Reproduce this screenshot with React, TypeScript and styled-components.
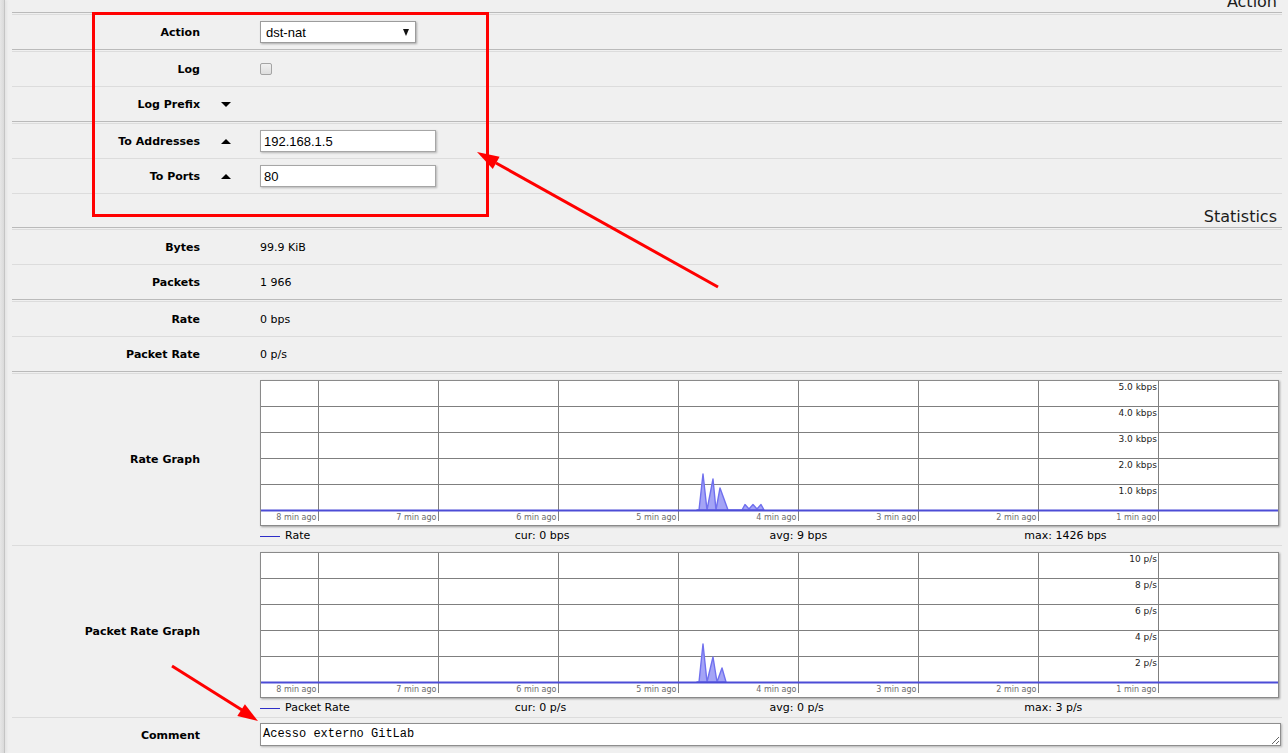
import React from "react";
import styled, { createGlobalStyle } from "styled-components";

const GlobalStyle = createGlobalStyle`
  * { box-sizing: border-box; }
  html, body {
    margin: 0;
    padding: 0;
    background: #f0f0f0;
    overflow: hidden;
  }
  body {
    font-family: "DejaVu Sans", Verdana, sans-serif;
    font-size: 11px;
    color: #000;
  }
`;

const Screen = styled.div`
  position: relative;
  width: 1288px;
  height: 753px;
  overflow: hidden;
  display: flex;
`;

const Sidebar = styled.div`
  width: 5px;
  flex-shrink: 0;
  background: linear-gradient(to right, #e6e6e6, #dadada);
  border-right: 1px solid #c4c4c4;
  box-shadow: 2px 0 3px #e4e4e4;
`;

const Content = styled.div`
  flex: 1;
  margin: -22px 6px 0 7px;
`;

const Heading = styled.div`
  height: 34px;
  border-top: 1px solid #dcdcdc;
  display: flex;
  align-items: flex-end;
  justify-content: flex-end;
  padding: 0 5px 1px 0;
  font-size: 16px;
  line-height: 18px;
  color: #1c1c1c;
`;

const Group = styled.div`
  border-top: 1px solid #bababa;
  padding-top: 1px;
`;

const Row = styled.div`
  display: grid;
  grid-template-columns: 188px 60px 1fr;
  align-items: center;
  min-height: 35px;
  border-top: 1px solid #dcdcdc;
`;

const Label = styled.div`
  text-align: right;
  font-weight: bold;
`;

const Toggle = styled.span<{ $up?: boolean }>`
  display: block;
  width: 0;
  height: 0;
  margin-left: 21px;
  border-left: 5px solid transparent;
  border-right: 5px solid transparent;
  ${(p) => (p.$up ? "border-bottom: 5px solid #000;" : "border-top: 5px solid #000;")}
`;

const Value = styled.div`
  display: flex;
  align-items: center;
`;

const SelectBox = styled.div`
  width: 156px;
  height: 22px;
  display: flex;
  align-items: center;
  justify-content: space-between;
  padding: 0 6px 0 5px;
  background: #fff;
  border: 1px solid #9c9c9c;
  box-shadow: 1px 1px 2px rgba(0, 0, 0, 0.3);
  font: 13px "Liberation Sans", Arial, sans-serif;
`;

const Caret = styled.span`
  width: 0;
  height: 0;
  border-left: 3.5px solid transparent;
  border-right: 3.5px solid transparent;
  border-top: 7px solid #111;
`;

const CheckBox = styled.span`
  display: block;
  width: 12px;
  height: 12px;
  border: 1px solid #a4a4a4;
  border-radius: 2px;
  background: linear-gradient(#f0f0f0, #dedede);
`;

const TextInput = styled.input`
  width: 176px;
  height: 22px;
  padding: 0 3px;
  border: 1px solid #a6a6a6;
  background: #fff;
  box-shadow: 1px 1px 2px rgba(0, 0, 0, 0.25);
  font: 13px "Liberation Sans", Arial, sans-serif;
  color: #000;
  outline: none;
`;

const GraphCell = styled.div`
  padding: 6px 0 1px;
`;

const Frame = styled.div`
  width: 1019px;
  height: 146px;
  border: 1px solid #8a8a8a;
  background: #fff;
  box-shadow: 1px 1px 2px rgba(0, 0, 0, 0.35);
  svg {
    display: block;
  }
`;

const Legend = styled.div`
  width: 1019px;
  height: 18px;
  padding-top: 2px;
  display: grid;
  grid-template-columns: repeat(4, 1fr);
  align-items: center;
  line-height: 16px;
`;

const LegendName = styled.div`
  display: flex;
  align-items: center;
  gap: 5px;
  &::before {
    content: "";
    width: 20px;
    height: 1px;
    background: #2e2ec8;
  }
`;

const CommentCell = styled.div`
  padding-top: 5px;
  align-self: start;
`;

const Comment = styled.textarea`
  display: block;
  width: 1021px;
  height: 23px;
  padding: 3px 2px;
  border: 1px solid #8e8e8e;
  background: #fff;
  box-shadow: 1px 1px 2px rgba(0, 0, 0, 0.25);
  font: 12px/15px "Liberation Mono", "DejaVu Sans Mono", monospace;
  color: #000;
  outline: none;
  resize: both;
  overflow: hidden;
`;

const Annotations = styled.svg`
  position: absolute;
  left: 0;
  top: 0;
  pointer-events: none;
`;

const GW = 1017;
const GH = 144;
const vLines = [57, 177, 297, 417, 537, 657, 777, 897];
const hLines = [25, 51, 77, 103];
const times = ["8 min ago", "7 min ago", "6 min ago", "5 min ago", "4 min ago", "3 min ago", "2 min ago", "1 min ago"];

type GraphProps = { yLabels: string[]; points: string; legend: string[] };

const Graph = ({ yLabels, points, legend }: GraphProps) => (
  <GraphCell>
    <Frame>
      <svg width={GW} height={GH}>
        {hLines.map((y) => (
          <line key={y} x1={0} x2={GW} y1={y + 0.5} y2={y + 0.5} stroke="#7f7f7f" />
        ))}
        {vLines.map((x) => (
          <line key={x} x1={x + 0.5} x2={x + 0.5} y1={0} y2={140} stroke="#7f7f7f" />
        ))}
        <polygon points={points} fill="#a4a4f6" stroke="#7070ee" strokeWidth={1.4} strokeLinejoin="round" />
        <line x1={0} x2={GW} y1={129.5} y2={129.5} stroke="#4c4cd6" strokeWidth={1.8} />
        {yLabels.map((t, i) => (
          <text key={t} x={896} y={i * 26 + 9} textAnchor="end" fontSize={9} fill="#222">
            {t}
          </text>
        ))}
        {times.map((t, i) => (
          <text key={t} x={vLines[i] - 1.5} y={139} textAnchor="end" fontSize={8} fill="#6a6a6a">
            {t}
          </text>
        ))}
      </svg>
    </Frame>
    <Legend>
      <LegendName>{legend[0]}</LegendName>
      <div>{legend[1]}</div>
      <div>{legend[2]}</div>
      <div>{legend[3]}</div>
    </Legend>
  </GraphCell>
);

const ratePoints =
  "436,129 438,129 442,93 446,129 452,98 455,129 459,107 467,129 481,129 484,123.5 488,128 492,123.5 496,128 500,123.5 503,129";
const packetPoints = "436,129 438,129 442,91 446,129 452,104 456,129 461,115 465,129";

const App = () => (
  <Screen>
    <GlobalStyle />
    <Sidebar />
    <Content>
      <Heading>Action</Heading>
      <Group>
        <Row>
          <Label>Action</Label>
          <div />
          <Value>
            <SelectBox>
              dst-nat
              <Caret />
            </SelectBox>
          </Value>
        </Row>
      </Group>
      <Group>
        <Row>
          <Label>Log</Label>
          <div />
          <Value>
            <CheckBox />
          </Value>
        </Row>
        <Row>
          <Label>Log Prefix</Label>
          <Toggle />
          <div />
        </Row>
      </Group>
      <Group>
        <Row>
          <Label>To Addresses</Label>
          <Toggle $up />
          <Value>
            <TextInput defaultValue="192.168.1.5" />
          </Value>
        </Row>
        <Row>
          <Label>To Ports</Label>
          <Toggle $up />
          <Value>
            <TextInput defaultValue="80" />
          </Value>
        </Row>
      </Group>
      <Heading>Statistics</Heading>
      <Group>
        <Row>
          <Label>Bytes</Label>
          <div />
          <Value>99.9 KiB</Value>
        </Row>
        <Row>
          <Label>Packets</Label>
          <div />
          <Value>1 966</Value>
        </Row>
      </Group>
      <Group>
        <Row>
          <Label>Rate</Label>
          <div />
          <Value>0 bps</Value>
        </Row>
        <Row>
          <Label>Packet Rate</Label>
          <div />
          <Value>0 p/s</Value>
        </Row>
      </Group>
      <Group>
        <Row>
          <Label>Rate Graph</Label>
          <div />
          <Graph
            yLabels={["5.0 kbps", "4.0 kbps", "3.0 kbps", "2.0 kbps", "1.0 kbps"]}
            points={ratePoints}
            legend={["Rate", "cur: 0 bps", "avg: 9 bps", "max: 1426 bps"]}
          />
        </Row>
        <Row>
          <Label>Packet Rate Graph</Label>
          <div />
          <Graph
            yLabels={["10 p/s", "8 p/s", "6 p/s", "4 p/s", "2 p/s"]}
            points={packetPoints}
            legend={["Packet Rate", "cur: 0 p/s", "avg: 0 p/s", "max: 3 p/s"]}
          />
        </Row>
        <Row>
          <Label>Comment</Label>
          <div />
          <CommentCell>
            <Comment defaultValue="Acesso externo GitLab" />
          </CommentCell>
        </Row>
      </Group>
    </Content>
    <Annotations width={1288} height={753}>
      <rect x={93.5} y={13.5} width={394} height={202} fill="none" stroke="#ff0000" strokeWidth={3} />
      <line x1={718} y1={287} x2={496} y2={163} stroke="#ff0000" strokeWidth={3} />
      <polygon points="477,152 499.6,156.7 492.8,168.9" fill="#ff0000" />
      <line x1={172} y1={666} x2={242} y2={710} stroke="#ff0000" strokeWidth={3} />
      <polygon points="258,721 237.3,716.1 244.9,704.3" fill="#ff0000" />
    </Annotations>
  </Screen>
);

export default App;
